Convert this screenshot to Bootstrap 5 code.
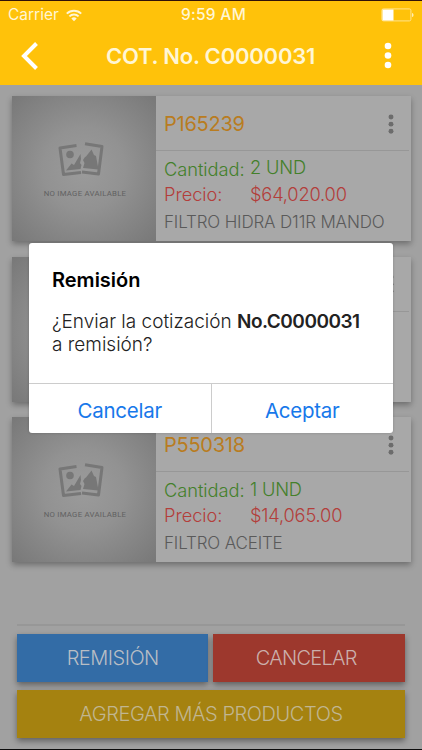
<!DOCTYPE html>
<html lang="es">
<head>
<meta charset="utf-8">
<meta name="viewport" content="width=device-width, initial-scale=1">
<title>COT. No. C0000031</title>
<link rel="stylesheet" href="https://cdn.jsdelivr.net/npm/bootstrap@5.3.0/dist/css/bootstrap.min.css">
<style>
html,body{height:750px;overflow:hidden}
body{font-family:Inter,"Liberation Sans",sans-serif;font-weight:300;background:#a1a1a1;line-height:1}
.screen{width:422px;height:750px;border-top:1px solid #301207;border-bottom:1px solid #0c0c0c}
.topbar{height:84px;background:#ffc20a;color:#fff6d5;flex:none}
.status{height:28px;font-size:15.5px;padding:0 8px 0 8px}
.status>*{flex:1 1 0}
.carrier{font-weight:400;letter-spacing:0}
.carrier svg{margin-left:7px}
.clock{font-weight:500;letter-spacing:.3px;padding-left:5px}
.titlebar{height:54px;padding:0 30px 0 20px}
.titlebar h1{font-size:22px;font-weight:600;letter-spacing:-.2px;padding-right:3px}
.products{padding:11px 11px 0 12px;gap:15.7px}
.product{height:145px;background:#a8a8a8;box-shadow:0 3px 6px rgba(0,0,0,.32)}
.thumb{width:144px;flex:none;background:radial-gradient(circle at 50% 50%,#9b9b9b 0,#929292 40%,#787878 100%)}
.thumb svg{display:block;margin:46px 0 0 46px}
.thumb-label{font:400 7.8px Roboto,sans-serif;letter-spacing:.25px;line-height:10px;color:#616161;margin:11px 0 0 2px}
.code{height:55px;border-bottom:1px solid #979797;font-size:20px;font-weight:400;letter-spacing:-.25px;color:#b97c20;padding:2px 15px 0 8px;margin-right:2px}
.details{padding-left:8px;font-size:18.3px}
.line{height:26px}
.line dt,.line dd{font-weight:300;margin:0}
.line dt{width:86px;letter-spacing:-.05px}
.line dd{letter-spacing:-.2px}
.qty{color:#44802b;margin-top:5px}
.qty dd{margin-top:-3px}
.price{color:#b33e3b;margin-top:-1px}
.desc{font-size:17px;height:30px;color:#5a5a5a;letter-spacing:-.15px}
.actions{padding:0 17px 11px;gap:8px}
.actions hr{margin:0;border-top:2px solid #979797;opacity:1}
.action{height:48px;border:0;border-radius:0;font-size:20px;font-weight:300;letter-spacing:-.5px;color:#b9bec5;box-shadow:0 3px 6px rgba(0,0,0,.4);padding:0}
.blue{background:#336ca6}.red{background:#9d382d;color:#cbb0ac}.gold{background:#a58210;color:#c1b691}
.red{letter-spacing:-.7px;padding-right:6px}.gold{letter-spacing:-.43px}
.dialog{left:29px;top:243px;width:364px;height:190px;background:#fff;border-radius:3px;box-shadow:0 0 3px rgba(0,0,0,.2)}
.dialog-text{height:140px;padding:26px 22px 0 23px;color:#222}
.dialog-text h2{font-size:20px;line-height:22px;font-weight:600;letter-spacing:0;color:#000;margin:0 0 19px}
.dialog-text p{font-size:19px;line-height:23px;margin:0;letter-spacing:0}
.dialog-text strong{font-weight:600;letter-spacing:-.5px}
.dialog-actions{height:50px;border-top:1px solid #ccc}
.dialog-actions button{border:0;background:none;color:#1778ea;font-size:20.5px;font-weight:400;letter-spacing:-.25px;flex:1;padding:6px 0 0}
.dialog-actions button+button{border-left:1px solid #ccc}
</style>
<script src="https://cdn.jsdelivr.net/npm/bootstrap@5.3.0/dist/js/bootstrap.bundle.min.js"></script>
</head>
<body>
<svg class="d-none">
<symbol id="dots" viewBox="0 0 8 28"><circle cx="4" cy="4" r="3.3"/><circle cx="4" cy="13.5" r="3.3"/><circle cx="4" cy="23" r="3.3"/></symbol>
<symbol id="noimg" viewBox="0 0 46 36">
<g fill="none" stroke="#777" stroke-width="3" stroke-linejoin="round"><path d="M18.500 3.500L2 6l3.500 26.500L23 30.500"/><path d="M27 1.700l17 2.800-3.500 27.500L24 30"/></g>
<g fill="#777"><circle cx="12" cy="12.500" r="3.800"/><path d="M8 28.500l5.500-7 2.500 1.500 6.500-11 .5 5-1 4 1.500 2-1 4z"/><path d="M25 26l1.500-5-1.500-3 2-3 1-.5 5.500-7 2.500 5.500 2 1 2.500 13.500z"/></g>
</symbol>
</svg>
<div class="screen position-relative d-flex flex-column">
<header class="topbar">
<div class="status d-flex align-items-center">
<div class="carrier d-flex align-items-center">Carrier<svg width="16" height="13" viewBox="0 0 16 13" fill="none" stroke="#fff6d5" stroke-width="2"><path d="M.8 4.600a10.300 10.300 0 0 1 14.400 0M3.400 7.400a6.500 6.500 0 0 1 9.200 0"/><path d="M8 12.300L5.300 9.600a3.900 3.900 0 0 1 5.400 0z" fill="#fff6d5" stroke="none"/></svg></div>
<div class="clock text-center">9:59 AM</div>
<div class="d-flex justify-content-end"><svg width="33" height="14" viewBox="0 0 33 14"><rect x=".9" y=".9" width="29" height="12" rx="1.500" fill="none" stroke="#ffe48d"/><path fill="#fff" d="M1.500 1.500h11v11h-11z"/><path fill="#ffedb2" d="M31 5c2 0 2 4 0 4z"/></svg></div>
</div>
<div class="titlebar d-flex align-items-center justify-content-between">
<svg width="20" height="28" viewBox="0 0 20 28"><path d="M16.500 1.500L4 14l12.500 12.500" fill="none" stroke="#fff" stroke-width="4"/></svg>
<h1 class="m-0">COT. No. C0000031</h1>
<svg width="8" height="28" fill="#fff"><use href="#dots"/></svg>
</div>
</header>
<main class="products d-flex flex-column">
<article class="product d-flex">
<div class="thumb text-center"><svg width="46" height="36"><use href="#noimg"/></svg><div class="thumb-label">NO IMAGE AVAILABLE</div></div>
<div class="flex-grow-1"><div class="code d-flex align-items-center justify-content-between"><span>P165239</span><svg width="6" height="21" fill="#6c6c6c"><use href="#dots"/></svg></div>
<dl class="details m-0"><div class="line qty d-flex align-items-center"><dt>Cantidad:</dt><dd>2 UND</dd></div><div class="line price d-flex align-items-center"><dt>Precio:</dt><dd>$64,020.00</dd></div><div class="desc d-flex align-items-center">FILTRO HIDRA D11R MANDO</div></dl></div>
</article>
<article class="product d-flex">
<div class="thumb"></div>
<div class="flex-grow-1"><div class="code d-flex align-items-center justify-content-end"><svg width="6" height="21" fill="#6c6c6c"><use href="#dots"/></svg></div></div>
</article>
<article class="product d-flex">
<div class="thumb text-center"><svg width="46" height="36"><use href="#noimg"/></svg><div class="thumb-label">NO IMAGE AVAILABLE</div></div>
<div class="flex-grow-1"><div class="code d-flex align-items-center justify-content-between"><span>P550318</span><svg width="6" height="21" fill="#6c6c6c"><use href="#dots"/></svg></div>
<dl class="details m-0"><div class="line qty d-flex align-items-center"><dt>Cantidad:</dt><dd>1 UND</dd></div><div class="line price d-flex align-items-center"><dt>Precio:</dt><dd>$14,065.00</dd></div><div class="desc d-flex align-items-center">FILTRO ACEITE</div></dl></div>
</article>
</main>
<footer class="actions mt-auto d-flex flex-column">
<hr>
<div class="d-flex" style="gap:5px"><button class="action blue btn flex-fill w-50">REMISIÓN</button><button class="action red btn flex-fill w-50">CANCELAR</button></div>
<button class="action gold btn w-100">AGREGAR MÁS PRODUCTOS</button>
</footer>
</div>
<section class="dialog position-absolute d-flex flex-column" role="dialog">
<div class="dialog-text"><h2>Remisión</h2><p>¿Enviar la cotización <strong>No.C0000031</strong><br>a remisión?</p></div>
<div class="dialog-actions d-flex"><button>Cancelar</button><button>Aceptar</button></div>
</section>
</body>
</html>
